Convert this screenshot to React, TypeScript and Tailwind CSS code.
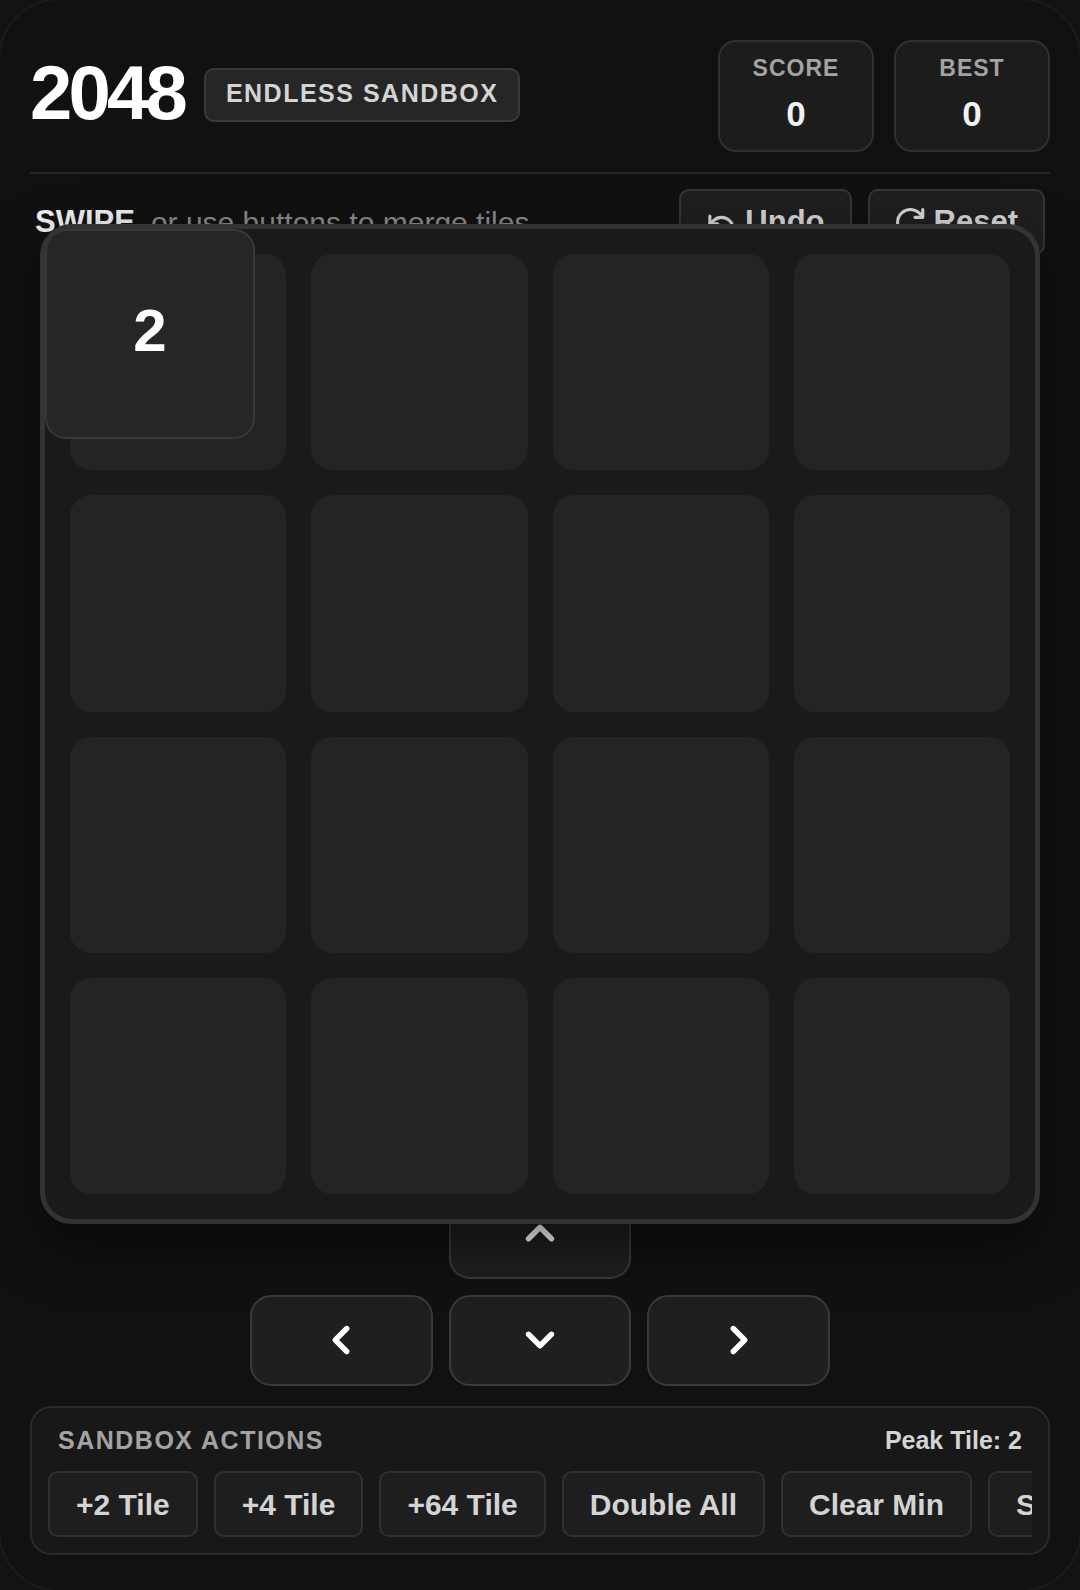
import { useState } from "react";
import type { ReactNode } from "react";
import {
   ChevronDown,
   ChevronLeft,
   ChevronRight,
   ChevronUp,
   Undo,
} from "lucide-react";
import type { LucideIcon } from "lucide-react";

const SIZE = 4;
const actions = [
   "+2 Tile",
   "+4 Tile",
   "+64 Tile",
   "Double All",
   "Clear Min",
   "Shuffle",
];

function ResetIcon() {
   return (
      <svg
         width={31}
         height={31}
         viewBox="0 0 24 24"
         fill="none"
         stroke="currentColor"
         strokeWidth={2.4}
         strokeLinecap="round"
         strokeLinejoin="round"
         aria-hidden="true"
      >
         <path d="M21.5 2v6h-6M21.34 15.57a10 10 0 1 1-.57-8.38" />
      </svg>
   );
}

function ScoreBox({ label, value }: { label: string; value: number }) {
   return (
      <div className="flex w-[156px] flex-col items-center rounded-[18px] border-2 border-[#303030] bg-[#1c1c1c] pt-2 pb-3 font-bold">
         <span className="text-[23px] leading-9 tracking-[1px] text-[#a3a3a3]">
            {label}
         </span>
         <span className="pt-1 text-[35px] leading-[48px] text-[#f0f0f0]">{value}</span>
      </div>
   );
}

function ToolButton({ icon, label }: { icon: ReactNode; label: string }) {
   return (
      <button
         type="button"
         className="flex h-[66px] items-center gap-2 rounded-[10px] border-2 border-[#363636] bg-[#1f1f1f] px-[25px] text-[31px] font-bold text-[#d4d4d4]"
      >
         {icon}
         {label}
      </button>
   );
}

function MoveButton({
   icon: Icon,
   label,
   className = "",
}: {
   icon: LucideIcon;
   label: string;
   className?: string;
}) {
   return (
      <button
         type="button"
         aria-label={label}
         className={`flex h-[91px] items-center justify-center rounded-[21px] border-2 border-[#3a3a3a] bg-[#1f1f1f] pb-0.5 text-white ${className}`}
      >
         <Icon size={46} strokeWidth={2.8} />
      </button>
   );
}

function Board({ tile }: { tile: number }) {
   return (
      <div className="relative z-10 mx-[10px] -mt-[31px] -mb-[36px] aspect-square rounded-[32px] border-[5px] border-[#333333] bg-[#1a1a1a] p-[25px] shadow-[0_22px_56px_rgba(0,0,0,0.5)]">
         <div className="grid h-full grid-cols-4 grid-rows-4 gap-[25px]">
            {Array.from({ length: SIZE * SIZE }, (_, i) => (
               <div key={i} className="rounded-[21px] bg-[#242424]" />
            ))}
         </div>
         {/* the moving tile lies over the grid */}
         <div className="absolute top-0 left-0 flex h-[21.2%] w-[21.2%] items-center justify-center rounded-[21px] border-2 border-[#383838] bg-[#262626] pb-1.5 text-[60px] font-bold text-white">
            {tile}
         </div>
      </div>
   );
}

export default function App() {
   const [score] = useState(0);
   const [best] = useState(0);
   const [peak] = useState(2);

   return (
      <div className="min-h-screen bg-[#131313] font-['Liberation_Sans',Arial,sans-serif]">
         <main className="flex min-h-screen flex-col rounded-[60px] bg-[#111111] px-[30px] pt-10 pb-8 ring-2 ring-[#1c1c1c]">
            <header className="flex items-center justify-between border-b-2 border-[#262626] pb-5">
               <div className="flex items-center gap-5 pb-0.5">
                  <h1 className="pb-1 text-[76px] leading-none font-bold tracking-tighter text-white">
                     2048
                  </h1>
                  <span className="rounded-[10px] border-2 border-[#3a3a3a] bg-[#262626] px-5 pt-1 pb-2 text-[25px] leading-[38px] font-bold tracking-[1.5px] text-[#d4d4d4]">
                     ENDLESS SANDBOX
                  </span>
               </div>
               <div className="flex gap-5">
                  <ScoreBox label="SCORE" value={score} />
                  <ScoreBox label="BEST" value={best} />
               </div>
            </header>

            <div className="mt-[15px] flex items-center justify-between px-[5px]">
               <p className="flex items-center gap-4 text-[30px] text-[#8a8a8a]">
                  <strong className="text-[31px] text-[#f0f0f0]">SWIPE</strong>
                  <span>or use buttons to merge tiles</span>
               </p>
               <div className="flex gap-4">
                  <ToolButton icon={<Undo size={31} strokeWidth={2.4} />} label="Undo" />
                  <ToolButton icon={<ResetIcon />} label="Reset" />
               </div>
            </div>

            <Board tile={peak} />

            <div className="mx-auto grid w-[580px] grid-cols-3 gap-4">
               <MoveButton icon={ChevronUp} label="Up" className="col-start-2" />
               <MoveButton icon={ChevronLeft} label="Left" className="col-start-1" />
               <MoveButton icon={ChevronDown} label="Down" />
               <MoveButton icon={ChevronRight} label="Right" />
            </div>

            <section className="mt-5 rounded-[21px] border-2 border-[#2a2a2a] bg-[#181818] p-4">
               <div className="flex items-center justify-between px-[10px] text-[25px] leading-8 font-bold">
                  <h2 className="tracking-[1.5px] text-[#a3a3a3]">SANDBOX ACTIONS</h2>
                  <span className="text-[#d4d4d4]">Peak Tile: {peak}</span>
               </div>
               <div className="mt-[15px] flex gap-4 overflow-hidden">
                  {actions.map((action) => (
                     <button
                        key={action}
                        type="button"
                        className="h-[66px] shrink-0 rounded-[10px] border-2 border-[#303030] bg-[#1e1e1e] px-[26px] text-[30px] font-bold text-[#d4d4d4]"
                     >
                        {action}
                     </button>
                  ))}
               </div>
            </section>
         </main>
      </div>
   );
}
